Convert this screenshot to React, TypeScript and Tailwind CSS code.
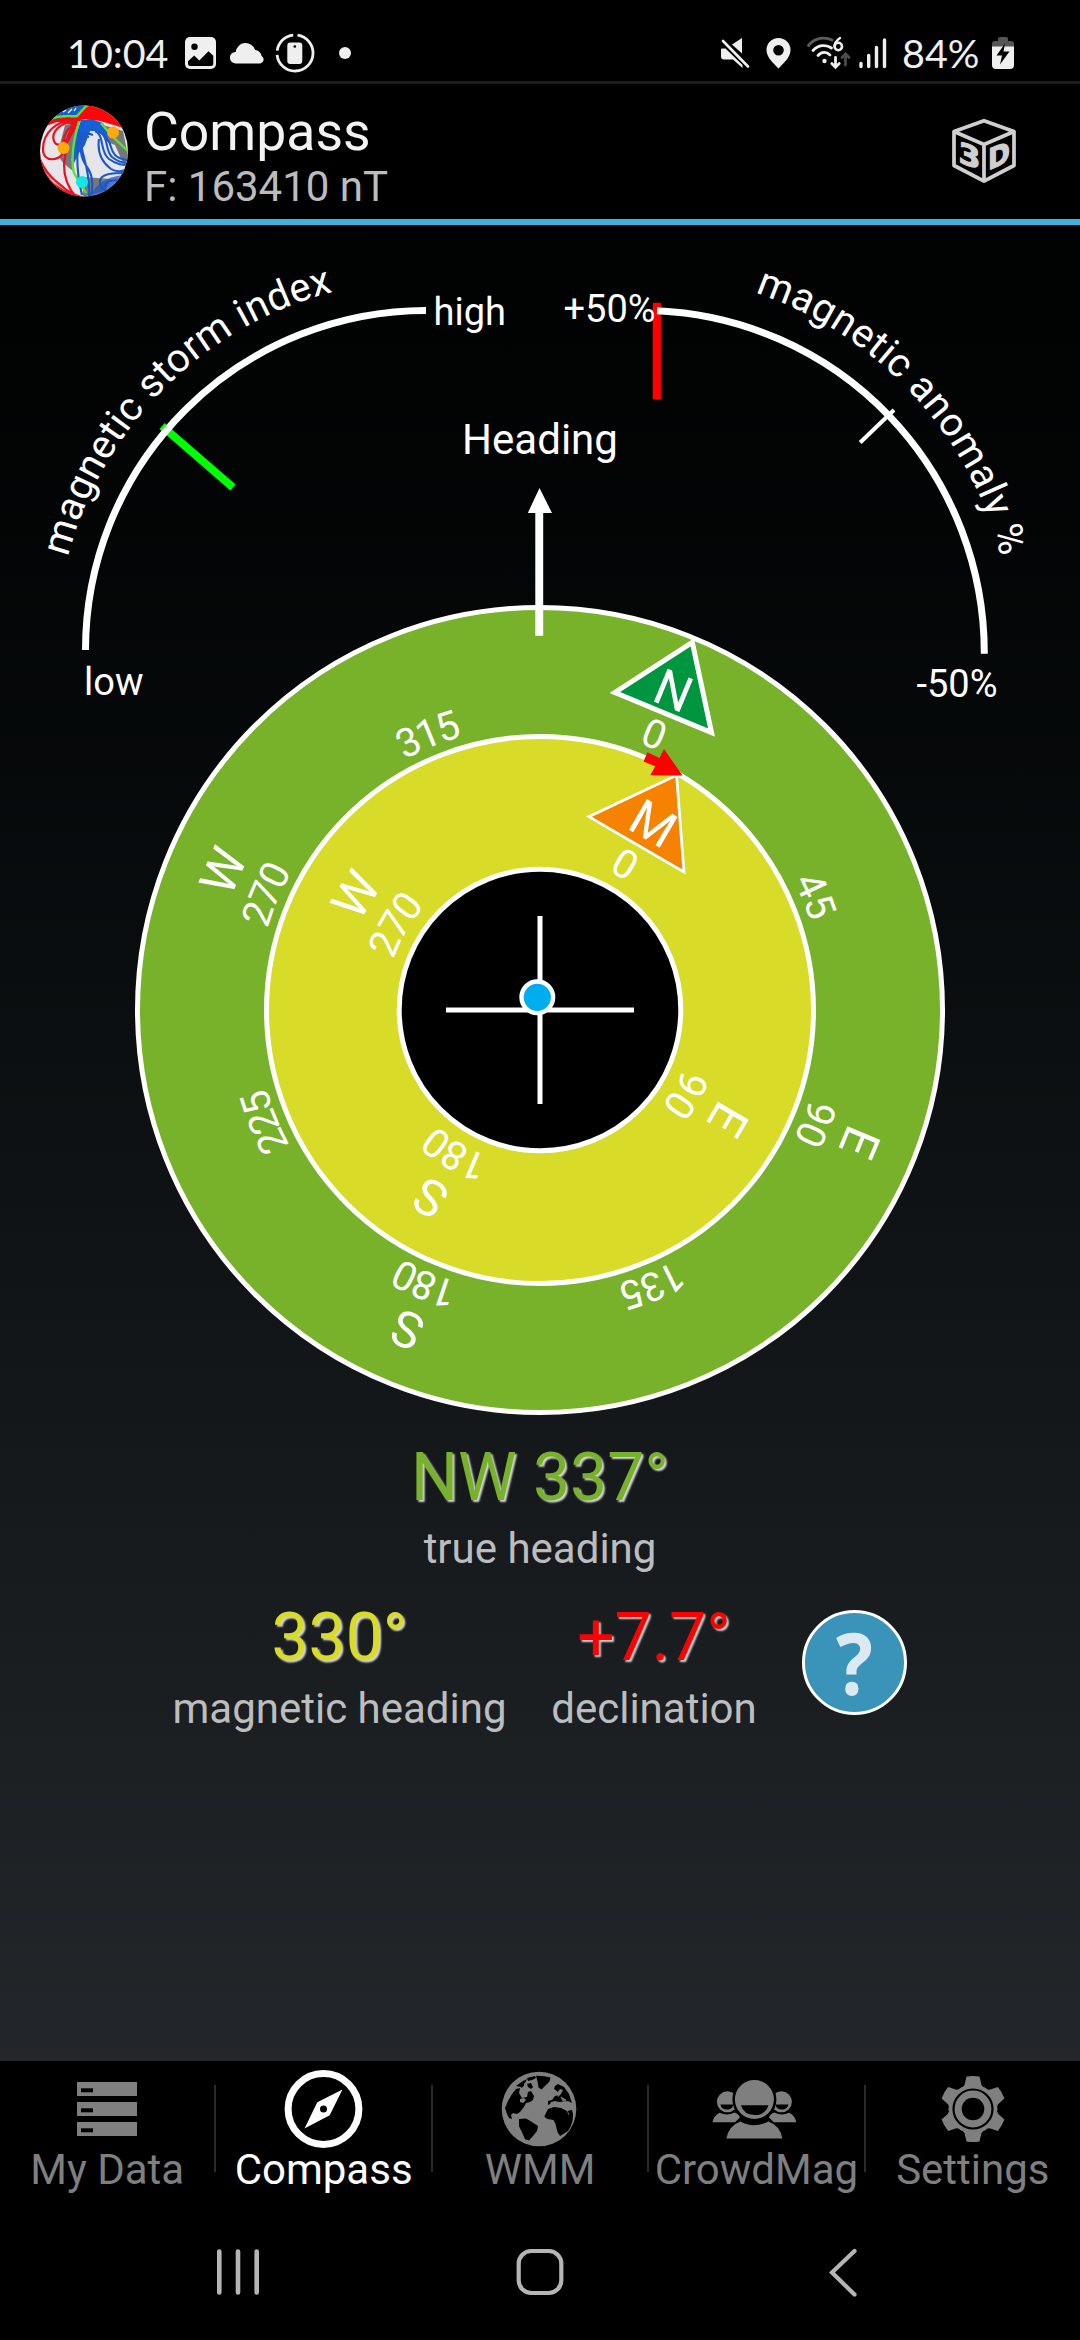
import type { ReactNode } from "react";

const CX = 540;
const CY = 1010;
const TRUE_NORTH = 22.5;
const MAGNETIC_NORTH = 30.2;

function ImageIcon() {
  return (
    <svg className="h-8 w-[31px]" viewBox="0 0 31 32">
      <rect width="31" height="32" rx="5" fill="#efefef" />
      <circle cx="9.5" cy="9.7" r="3.2" fill="#000" />
      <path d="M3 26.5V24.2l6.2-5.8 5.1 5.1 9.2-9.3 4.8 4.6v7.7q0 2.5-2.5 2.5H5.5Q3 29 3 26.5z" fill="#000" />
    </svg>
  );
}

function CloudIcon() {
  return (
    <svg className="h-[21px] w-[35px]" viewBox="0 0 35 21">
      <path d="M6 20.5a5.8 5.8 0 0 1-.6-11.6h.3a10 10 0 0 1 19.5-1.8 6.600 6.600 0 0 1 6.400 6 4 4 0 0 1-1.200 7.400z" fill="#efefef" />
    </svg>
  );
}

function PhoneRingIcon() {
  return (
    <svg className="h-10 w-10" viewBox="0 0 40 40">
      <g fill="none" stroke="#efefef" strokeWidth="2.8">
        <path d="M22.500 2.200A18 18 0 1 1 2.100 21.800" />
        <path d="M2.200 17.600A18 18 0 0 1 18.200 2.100" />
      </g>
      <rect x="12.300" y="9.500" width="15" height="21.500" rx="3" fill="#efefef" />
      <circle cx="19.800" cy="13.500" r="1.300" fill="#000" />
    </svg>
  );
}

function MuteIcon() {
  return (
    <svg className="h-[32px] w-[30px]" viewBox="0 0 30 32">
      <path d="M22 1v15.500L12 7.500zM1.500 11.500h4l17 16.500v3L13 22.500H4q-3 0-3-3v-7z" fill="#efefef" />
      <path d="M3 4l25 25.500" stroke="#efefef" strokeWidth="2.600" strokeLinecap="round" />
    </svg>
  );
}

function PinIcon() {
  return (
    <svg className="h-[31px] w-[25px]" viewBox="0 0 25 31">
      <path fillRule="evenodd" d="M12.500 0A12 12 0 0 1 24.500 12.200C24.500 20 16 26.500 12.500 30.500 9 26.500.5 20 .5 12.200A12 12 0 0 1 12.500 0zm0 7a5.300 5.300 0 1 0 0 10.600 5.300 5.300 0 0 0 0-10.600z" fill="#efefef" />
    </svg>
  );
}

function WifiIcon() {
  return (
    <svg className="h-[34px] w-[44px]" viewBox="0 0 44 34">
      <g fill="none" strokeWidth="2.800" strokeLinecap="round">
        <path d="M1.500 9.500C8 1.500 18 .5 25 4" stroke="#5c5c5c" />
        <path d="M6 14.500c5-5.500 13-6.500 18.500-2.500" stroke="#efefef" />
        <path d="M11 19.500c3.500-4 8.500-4 12-.5" stroke="#efefef" />
        <path d="M28.500 21.500v9M24.800 27.500l3.700 3.700 3.700-3.700" stroke="#efefef" />
        <path d="M38.500 29v-10M35 21.500l3.500-3.700 3.500 3.700" stroke="#4c4c4c" />
        <path d="M33 2c-4 3-5.500 5.500-5.500 8.300" stroke="#efefef" strokeWidth="2.400" />
        <circle cx="31.300" cy="10.500" r="3.700" stroke="#efefef" strokeWidth="2.600" />
      </g>
      <circle cx="17.500" cy="25" r="2.200" fill="#efefef" />
    </svg>
  );
}

function SignalIcon() {
  return (
    <svg className="h-[31px] w-[28px]" viewBox="0 0 28 31">
      <path d="M2 25.500v3M9.700 17.500v11M17.500 9.500v19M25.500 2v26.500" stroke="#efefef" strokeWidth="3.400" strokeLinecap="round" />
    </svg>
  );
}

function BatteryIcon() {
  return (
    <svg className="h-8 w-[22px]" viewBox="0 0 22 32">
      <path d="M6 4V2q0-2 2-2h6q2 0 2 2v2h3q3 0 3 3v3H0V7q0-3 3-3z" fill="#555" />
      <path d="M0 9.500h22V28q0 4-4 4H4q-4 0-4-4z" fill="#efefef" />
      <path d="M13 6.500L4.500 18.500H10L8 27.500l9.500-13H11.500z" fill="#000" />
    </svg>
  );
}

function GlobeLogo() {
  return (
    <svg className="h-[92px] w-[90px]" viewBox="0 0 90 92">
      <defs>
        <clipPath id="logo-disc">
          <ellipse cx="45" cy="46" rx="44" ry="45.500" />
        </clipPath>
      </defs>
      <g clipPath="url(#logo-disc)">
        <rect width="90" height="92" fill="#e6e6ea" />
        <path d="M26 20l14-3-5 36-11 2-4-12zM20 52l12-4 2 18-10-8zM44 72l28 2-6 12-22 6zM64 20l20 6 6 30-6 2-8-18-10-4z" fill="#77777a" />
        <path d="M0 0h50L40 11 22 13 6 22z" fill="#1560c8" />
        <path d="M24 7l3-2M29 8l4-4M35 6l2-3" stroke="#fff" strokeWidth="1.200" />
        <path d="M42 15l10-1 12 4 8 14-5 0-8-6-8 0-5 14-6 8-6 12 0-20z" fill="#1560d8" />
        <path d="M51 0h20l16 24-9-3-17-5-14-2-5 1-6 10-10 18 6-24-14-2-14 5 8-7 26-5z" fill="#fa0808" />
        <path d="M10 15c10-6 20-3 28-4l10-11M40 16c-4 14-9 36-5 52l12 20M62 18l10 12 18 17" fill="none" stroke="#5ee23a" strokeWidth="2.400" />
        <path d="M36 16C18 14 4 28 4 44c0 14 16 12 20 4M36 17C20 17 12 28 15 36c2 6 10 4 12-2M38 18C26 24 26 30 24 36M36 20C24 34 28 44 25 60c0 16 6 26 14 34M0 52c6 16 16 24 24 30 6 6 12 8 18 10M2 62c6 16 22 24 32 30" fill="none" stroke="#e91320" strokeWidth="2.200" />
        <path d="M0 54c4 16 18 30 44 40L32 90C16 82 6 68 0 54z" fill="#ee1018" />
        <g fill="none" stroke="#1b58c8" strokeWidth="2.100">
          <path d="M41 26c-4 20-4 40 2 64M44 30c-6 16 8 28 6 62M46 32c-6 12-5 20 2 30 6 8 6 20 4 30M50 32c-8-2-10 6-6 10M54 30c-10-4-16 2-12 8" />
          <path d="M56 26c10 4 4 20 14 28 8 6 14 6 20 6M59 26c12 6 6 18 14 26 6 5 10 6 16 6M62 28c12 8 8 16 14 22 4 4 8 4 12 5M60 34c-2 14 4 24 12 30 6 4 12 2 18 0" />
          <path d="M88 68c-14 0-28 0-27 10 0 6 6 8 12 8M84 76c-10-2-18 0-18 6" />
        </g>
        <path d="M50 92c8-14 18-20 34-22l-8 12-14 10z" fill="#1b58c8" opacity=".75" />
      </g>
      <circle cx="24.500" cy="43" r="6" fill="#ffa90a" />
      <circle cx="74" cy="27.500" r="6" fill="#ffa90a" />
      <circle cx="43" cy="77" r="6" fill="#14e6e6" />
    </svg>
  );
}

function CubeIcon() {
  return (
    <svg className="h-[66px] w-[66px]" viewBox="0 0 66 66">
      <path d="M33 2.800L63 13.500V47.500L33 63.200 3 47.500V13.500zM3 13.500L33 26.500 63 13.500M33 26.500V63" fill="none" stroke="#cfcfcf" strokeWidth="3.700" strokeLinejoin="round" />
      <g fill="#cfcfcf" stroke="#cfcfcf" strokeWidth="1.200" fontFamily="'DejaVu Sans', sans-serif" fontWeight="700" fontSize="29">
        <text transform="matrix(1 .36 0 1 7.500 44)" textLength="22" lengthAdjust="spacingAndGlyphs">3</text>
        <text transform="matrix(1 -.42 0 1 37 52.500)" textLength="22" lengthAdjust="spacingAndGlyphs">D</text>
      </g>
    </svg>
  );
}

function RingLabel({ angle, radius, text, id, size, spacing = 0 }: { angle: number; radius: number; text: string; id: string; size: number; spacing?: number }) {
  return (
    <g transform={`rotate(${angle} ${CX} ${CY})`}>
      <path id={id} fill="none" d={`M${CX - radius} ${CY}A${radius} ${radius} 0 0 1 ${CX + radius} ${CY}`} />
      <text fontSize={size} textAnchor="middle" letterSpacing={spacing}>
        <textPath href={`#${id}`} startOffset="50%">{text}</textPath>
      </text>
    </g>
  );
}

const outerLabels = ["0", "45", "90", "135", "180", "225", "270", "315"];
const outerCardinals = [
  { a: 90, t: "E" },
  { a: 180, t: "S" },
  { a: 271.2, t: "W" },
];
const innerCardinals = [
  { a: 90, t: "E" },
  { a: 180, t: "S" },
  { a: 271.800, t: "W" },
];

function CompassDial() {
  return (
    <svg className="block h-[1200px] w-[1080px] shrink-0" viewBox="0 225 1080 1200" fontFamily="Roboto, sans-serif" fill="#fff">
      <path d="M162 426L233 487.500" stroke="#00ff00" strokeWidth="8" />
      <path d="M85.500 650A340.500 339.500 0 0 1 426 310.500" fill="none" stroke="#fff" strokeWidth="7" />
      <path d="M656.800 302.700V399.300" stroke="#ff0000" strokeWidth="8.200" />
      <path d="M657 310.700A342.500 342.500 0 0 1 984.300 653.700" fill="none" stroke="#fff" strokeWidth="7" />
      <path d="M894 410L860.200 442.500" stroke="#fff" strokeWidth="4" />

      <path id="storm-arc" fill="none" d="M56 650A370 370 0 0 1 426 280" />
      <text fontSize="40" letterSpacing="0.350">
        <textPath href="#storm-arc" startOffset="94">magnetic storm index</textPath>
      </text>
      <path id="anomaly-arc" fill="none" d="M636 273.400A376.600 376.600 0 0 1 1012.600 650" />
      <text fontSize="40" letterSpacing="0.500">
        <textPath href="#anomaly-arc" startOffset="121">magnetic anomaly %</textPath>
      </text>

      <g fontSize="38">
        <text x="433.500" y="325">high</text>
        <text x="84" y="695">low</text>
        <text x="563.500" y="322">+50%</text>
        <text x="916.500" y="697">-50%</text>
      </g>
      <text x="540" y="454" fontSize="42" textAnchor="middle">Heading</text>

      <circle cx={CX} cy={CY} r="402.500" fill="#78b22a" stroke="#fff" strokeWidth="5" />
      <circle cx={CX} cy={CY} r="273.500" fill="#d8db28" stroke="#fff" strokeWidth="5" />
      <circle cx={CX} cy={CY} r="140.800" fill="#000" stroke="#fff" strokeWidth="5" />
      <path d="M539.500 488L552 513H543.200V635.700H535.300V513H527.800z" />

      <g transform={`rotate(${TRUE_NORTH} ${CX} ${CY})`}>
        <path d="M540 612L592.300 688H487.700z" fill="#00963f" stroke="#fff" strokeWidth="5" />
        <text x="541" y="681.500" fontSize="50" textAnchor="middle">N</text>
      </g>
      {outerLabels.map((t, i) => (
        <RingLabel key={t} id={`outer-${t}`} angle={TRUE_NORTH + i * 45 + (t.length === 3 ? 0.2 : 0)} radius={284.500} text={t} size={40} spacing={t.length === 3 ? -2.200 : 0} />
      ))}
      {outerCardinals.map((c) => (
        <RingLabel key={c.t} id={`outer-${c.t}`} angle={TRUE_NORTH + c.a} radius={328.500} text={c.t} size={50} />
      ))}

      <g transform={`rotate(${MAGNETIC_NORTH} ${CX} ${CY})`}>
        <path d="M540 738.500L595 818.300H485z" fill="#f58200" stroke="#fff" strokeWidth="2.800" />
        <text x="544" y="809.500" fontSize="50" textAnchor="middle">M</text>
      </g>
      {["0", "90", "180", "270"].map((t, i) => (
        <RingLabel key={t} id={`inner-${t}`} angle={MAGNETIC_NORTH + i * 90} radius={155} text={t} size={40} spacing={t.length === 3 ? -2.200 : 0} />
      ))}
      {innerCardinals.map((c) => (
        <RingLabel key={c.t} id={`inner-${c.t}`} angle={MAGNETIC_NORTH + c.a} radius={200} text={c.t} size={50} />
      ))}
      <path d="M682.500 775.500L650.300 775.300 655.200 766.300 643.500 761.500 647.500 752.300 659.500 758 664 749z" fill="#ff0000" />

      <path d="M446 1010H634M540 916V1104" stroke="#fff" strokeWidth="5" />
      <circle cx="537.300" cy="997.300" r="15.800" fill="#00aeef" stroke="#fff" strokeWidth="4.400" />
    </svg>
  );
}

function Reading({ value, label, tone, width }: { value: string; label: string; tone: string; width: string }) {
  return (
    <div className={`flex flex-col items-center gap-[7px] whitespace-nowrap ${width}`}>
      <div className={`text-[66px] leading-[78px] [text-shadow:2px_2px_2px_#d8d8d8] ${tone}`}>{value}</div>
      <div className="text-[42px] leading-[50px] text-[#bcbdbe]">{label}</div>
    </div>
  );
}

function Readings() {
  return (
    <section className="mt-[14px] flex flex-col items-center gap-[25px]">
      <Reading value="NW 337°" label="true heading" tone="text-[#78b22a]" width="w-[300px]" />
      <div className="flex items-start gap-[45px]">
        <Reading value="330°" label="magnetic heading" tone="text-[#d8db28]" width="w-[333px]" />
        <Reading value="+7.7°" label="declination" tone="text-[#ff0000]" width="w-[206px]" />
        <button className="mt-[11px] flex h-[105px] w-[105px] items-center justify-center rounded-full border-[3px] border-white bg-[#3a93b9] font-['Open_Sans',sans-serif] text-[86px] leading-none font-bold text-[#dbeaf2]">
          <span className="block h-[99px] scale-x-90 leading-[97px]">?</span>
        </button>
      </div>
    </section>
  );
}

function DataIcon() {
  return (
    <svg className="h-[90px] w-[90px]" viewBox="0 0 90 90">
      {[18, 38, 58].map((y) => (
        <g key={y}>
          <rect x="15" y={y} width="60" height="14" fill="#7f7f7f" />
          <rect x="19" y={y + 6.300} width="12" height="4" fill="#000" />
        </g>
      ))}
    </svg>
  );
}

function CompassIcon() {
  return (
    <svg className="h-[90px] w-[90px]" viewBox="0 0 90 90">
      <circle cx="44.500" cy="45" r="35.400" fill="none" stroke="#fff" strokeWidth="7" />
      <path fillRule="evenodd" d="M63.500 25.500L50.700 51.300 25.500 64.500 38.300 38.300zM44.500 41.500a3.500 3.500 0 1 0 0 7 3.500 3.500 0 0 0 0-7z" fill="#fff" />
    </svg>
  );
}

function EarthIcon() {
  return (
    <svg className="h-[90px] w-[90px]" viewBox="5 4 90 90">
      <circle cx="49" cy="49" r="37.300" fill="#7f7f7f" />
      <g fill="#000">
        <path d="M18 41l4-7 4-5 4-1-1 5 3 5 5-1 1-5 3-1 3 5-1 4-3 2-4 1-2 4-4 5-3 2-4-1-2 2 1 4-3-1-2-4-2-6z" />
        <path d="M26 26l7-5 4-2-2 4-4 4zM37 18l8-2 1 2-4 2-4 1zM37 24l4-1 2 4-2 2-3-2zM31 25l3-1v2l-3 2z" />
        <path d="M46 15.700q8-.2 14.500 1.800l-1 4-4 4-4 4-3-2-1-6z" />
        <path d="M29 59l7-.6 6 3.600 6 4-1 5-4 5-4 4.500-4-1.200-3-7-3-6z" />
        <path d="M55 55l3-6 6-2 7 1 6 3 5-1 1 4q.5 9-5 17l-8 5-2.500-4-2-8-2-4-6-1-3-2z" />
        <path d="M58 45v-4l4-1 3-4 4-1-2-4-3-2 1-3 3-2 6 3 5 7 3 9-4-2-4 1-5 0-4-1-4 1-1 2z" />
      </g>
      <g fill="#7f7f7f">
        <path d="M30 39l4-1 2 2-3 3-3-1zM31 32l3-2 3 3-3 3-3-2zM67 33l3-4 3 1-2 4-3 3zM64 43l6-1 6-1 3 3-3 3-6-1-5 1z" />
        <path d="M77 50l2 5M71 37l5 3-3 1z" stroke="#7f7f7f" strokeWidth=".8" />
      </g>
    </svg>
  );
}

function CrowdIcon() {
  return (
    <svg className="h-[90px] w-[90px]" viewBox="1.600 0 90 90">
      <g fill="#7f7f7f">
        <circle cx="18" cy="37.800" r="10.500" />
        <circle cx="72" cy="37.800" r="10.500" />
        <path d="M3 58.300q1.500-6.500 7-9.500 8 3.500 15-.2 4 1.200 5.500 5l-5 4.700zM87 58.300q-1.500-6.500-7-9.500-8 3.500-15-.2-4 1.200-5.500 5l5 4.700z" />
      </g>
      <path d="M11 40.500h13q-1 5-6.500 5T11 40.500zM66 40.500h13q-1 5-6.500 5T66 40.500z" fill="#000" />
      <circle cx="45" cy="35.500" r="22" fill="#000" />
      <circle cx="45" cy="35.500" r="19.500" fill="#7f7f7f" />
      <path d="M31.500 41.300H59Q56 51 45.200 51T31.500 41.300z" fill="#000" />
      <path d="M17 74.500Q19.500 61.500 31 57.500q13.500 7.500 28 0 11.500 4 14 17z" fill="#7f7f7f" />
    </svg>
  );
}

function GearIcon() {
  return (
    <svg className="h-[90px] w-[90px]" viewBox="0 0 90 90">
      <g fill="#7f7f7f">
        {[0, 60, 120, 180, 240, 300].map((a) => (
          <path key={a} transform={`rotate(${a} 45 45)`} d="M38.500 12.500q6.500-1.200 13 0l2 8.500q1.500 3 5 3.500L45 45 31.500 24.500q3.500-.5 5-3.500z" />
        ))}
        <circle cx="45" cy="45" r="24" />
      </g>
      <circle cx="45" cy="45" r="19.500" fill="none" stroke="#000" strokeWidth="2.200" />
      <circle cx="45" cy="45" r="11.300" fill="#000" />
    </svg>
  );
}

function Tab({ label, icon, active }: { label: string; icon: ReactNode; active?: boolean }) {
  return (
    <div className="flex h-full w-0 flex-1 flex-col items-center pt-[3px]">
      {icon}
      <span className={`-mt-[9px] text-[42px] leading-[50px] whitespace-nowrap ${active ? "text-white" : "text-[#7f7f7f]"}`}>{label}</span>
    </div>
  );
}

function Divider() {
  return <span className="mt-6 h-[87px] w-0.5 shrink-0 bg-[#2a2a2a]" />;
}

export default function App() {
  return (
    <div className="flex h-[2340px] w-[1080px] flex-col overflow-hidden bg-black font-[Roboto,sans-serif]">
      <div className="flex h-[84px] shrink-0 items-center justify-between border-b-[3px] border-[#1c1c1c] pt-[25px] pr-[66px] pl-[67px]">
        <div className="flex items-center">
          <span className="w-[118px] font-[Lato,sans-serif] text-[39.500px] leading-[40px] text-[#efefef]">10:04</span>
          <ImageIcon />
          <span className="ml-[14px]"><CloudIcon /></span>
          <span className="ml-[10px]"><PhoneRingIcon /></span>
          <span className="ml-6 h-3 w-3 rounded-full bg-[#efefef]" />
        </div>
        <div className="flex items-center">
          <MuteIcon />
          <span className="ml-[16px]"><PinIcon /></span>
          <span className="ml-[16px]"><WifiIcon /></span>
          <span className="ml-[8px]"><SignalIcon /></span>
          <span className="ml-[15px] w-[90px] font-[Lato,sans-serif] text-[39.500px] leading-[40px] text-[#efefef]">84%</span>
          <BatteryIcon />
        </div>
      </div>

      <header className="flex h-[141px] shrink-0 items-start justify-between border-b-[6px] border-[#41b1df] pr-[63px] pl-[39px]">
        <div className="flex">
          <div className="pt-[21px]"><GlobeLogo /></div>
          <div className="ml-[15px] flex flex-col">
            <span className="mt-4 text-[53.500px] leading-[64px] text-[#f3f3f3]">Compass</span>
            <span className="-mt-[2px] text-[42px] leading-[50px] text-[#bcbcbc]">F: 163410 nT</span>
          </div>
        </div>
        <div className="pt-[34px]"><CubeIcon /></div>
      </header>

      <main className="flex h-[1836px] shrink-0 flex-col bg-linear-to-b from-[#010202] to-[#23272b]">
        <CompassDial />
        <Readings />
      </main>

      <nav className="flex h-[145px] shrink-0">
        <Tab label="My Data" icon={<DataIcon />} />
        <Divider />
        <Tab label="Compass" icon={<CompassIcon />} active />
        <Divider />
        <Tab label="WMM" icon={<EarthIcon />} />
        <Divider />
        <Tab label="CrowdMag" icon={<CrowdIcon />} />
        <Divider />
        <Tab label="Settings" icon={<GearIcon />} />
      </nav>

      <div className="flex h-[134px] items-start pt-[42px] pl-[216px]">
        <svg className="h-12 w-11" viewBox="0 0 44 48">
          <path d="M3.300 3.500v41M22 3.500v41M40.700 3.500v41" stroke="#b5b5b5" strokeWidth="4.600" strokeLinecap="round" />
        </svg>
        <svg className="ml-64 h-12 w-12" viewBox="0 0 48 48">
          <rect x="2.700" y="3" width="42.600" height="42" rx="12.500" fill="none" stroke="#b5b5b5" strokeWidth="4.200" />
        </svg>
        <svg className="ml-[264px] h-[50px] w-[30px]" viewBox="0 0 30 50">
          <path d="M26.500 3L4 24.500 26.500 46.500" fill="none" stroke="#b5b5b5" strokeWidth="4.200" strokeLinecap="round" />
        </svg>
      </div>
    </div>
  );
}
